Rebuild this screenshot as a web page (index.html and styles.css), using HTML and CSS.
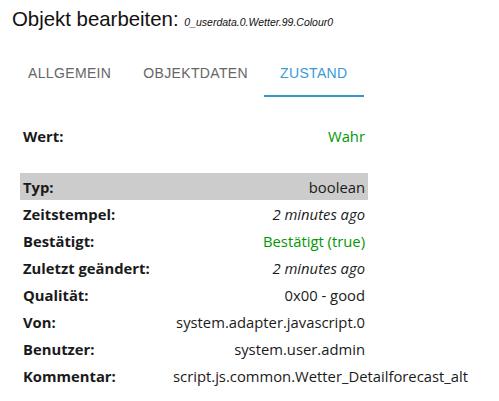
FILE: index.html
```html
<!DOCTYPE html>
<html lang="en">
  <head>
    <meta charset="UTF-8" />
    <title>Objekt bearbeiten</title>
    <link rel="stylesheet" href="styles.css">
  </head>
  <body>
    <div class="dialog-title">
      Objekt bearbeiten: <span class="object-id">0_userdata.0.Wetter.99.Colour0</span>
    </div>

    <div class="tabs">
      <div class="tab">Allgemein</div>
      <div class="tab">Objektdaten</div>
      <div class="tab active">Zustand</div>
    </div>

    <table class="state-table">
      <colgroup>
        <col class="col-label" />
        <col class="col-value" />
      </colgroup>
      <tbody>
        <tr>
          <td class="label">Wert:</td>
          <td class="value green">Wahr</td>
        </tr>
        <tr class="spacer"><td colspan="2"></td></tr>
        <tr class="highlight">
          <td class="label">Typ:</td>
          <td class="value">boolean</td>
        </tr>
        <tr>
          <td class="label">Zeitstempel:</td>
          <td class="value italic">2 minutes ago</td>
        </tr>
        <tr>
          <td class="label">Bestätigt:</td>
          <td class="value green">Bestätigt (true)</td>
        </tr>
        <tr>
          <td class="label">Zuletzt geändert:</td>
          <td class="value italic">2 minutes ago</td>
        </tr>
        <tr>
          <td class="label">Qualität:</td>
          <td class="value">0x00 - good</td>
        </tr>
        <tr>
          <td class="label">Von:</td>
          <td class="value">system.adapter.javascript.0</td>
        </tr>
        <tr>
          <td class="label">Benutzer:</td>
          <td class="value">system.user.admin</td>
        </tr>
        <tr>
          <td class="label">Kommentar:</td>
          <td class="value">script.js.common.Wetter_Detailforecast_alt</td>
        </tr>
      </tbody>
    </table>
  </body>
</html>
```

FILE: styles.css
```css
body {
  margin: 0;
  padding: 8px 12px 0 12px;
  font-family: "Liberation Sans", Arial, sans-serif;
  color: #222;
  background: #fff;
}
.dialog-title {
  font-size: 20.4px;
  line-height: 23px;
  color: #111;
}
.object-id {
  font-size: 10.5px;
  font-style: italic;
}
.tabs {
  display: flex;
  margin-top: 15px;
}
.tab {
  height: 48px;
  line-height: 48px;
  padding: 0 16px;
  box-sizing: border-box;
  font-size: 14px;
  text-transform: uppercase;
  letter-spacing: 0.35px;
  color: #666;
}
.tab.active {
  color: #3a9ad6;
  border-bottom: 2px solid #3399cc;
}
.state-table {
  margin: 25px 0 0 8px;
  width: 348px;
  table-layout: fixed;
  border-collapse: collapse;
  font-family: "Open Sans", sans-serif;
  font-size: 14.8px;
  color: #1a1a1a;
}
.col-label {
  width: 150px;
}
.state-table td {
  height: 27px;
  padding: 0 3px;
  white-space: nowrap;
}
.label {
  font-weight: bold;
}
.value {
  text-align: right;
}
.green {
  color: #009900;
}
.italic {
  font-style: italic;
}
.highlight {
  background: #cccccc;
}
.state-table .spacer td {
  height: 24px;
}
```
